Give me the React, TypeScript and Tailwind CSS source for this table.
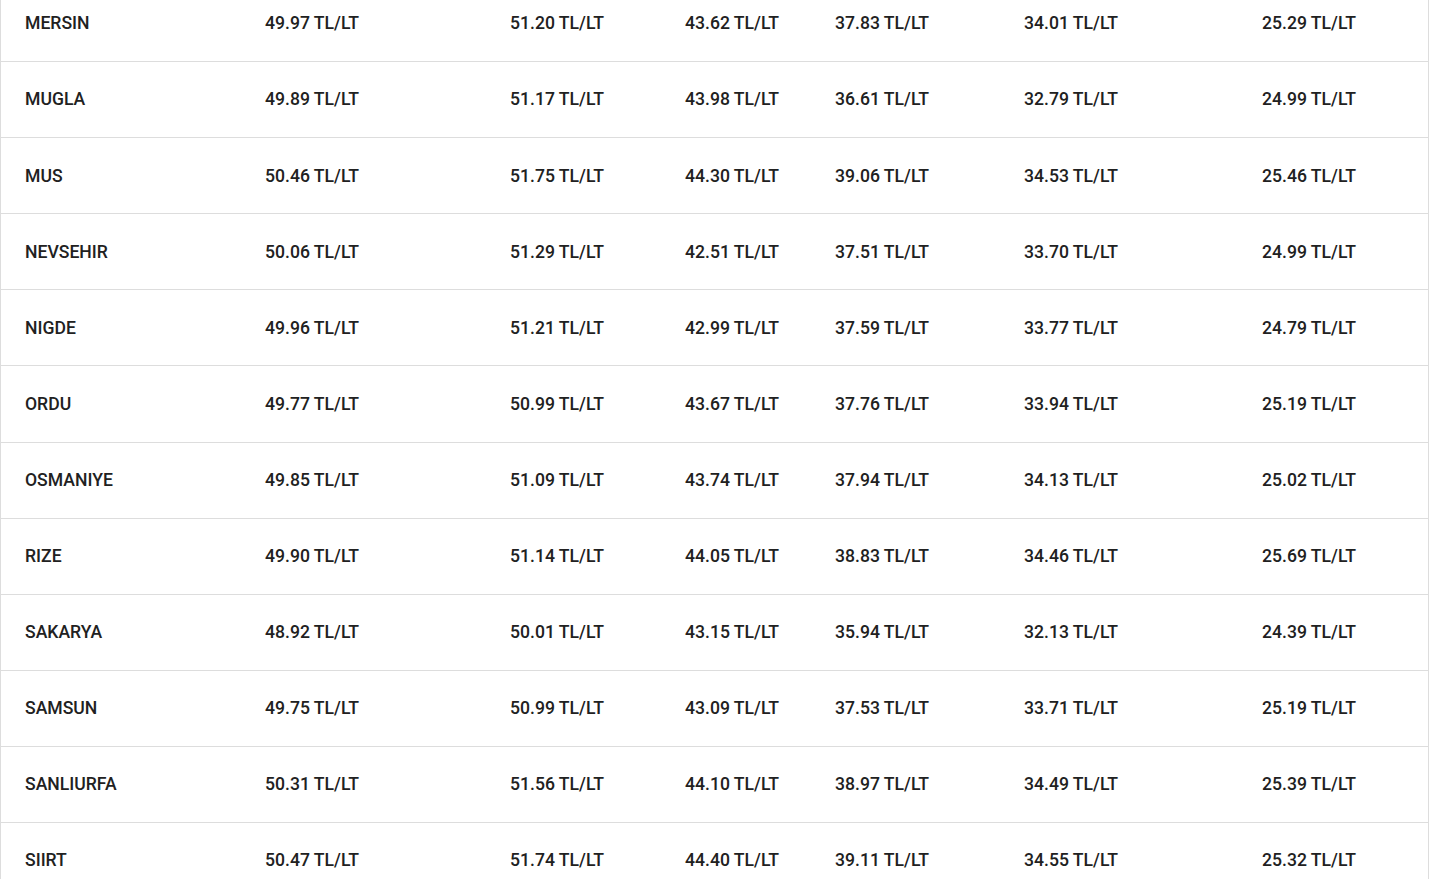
const rows: string[][] = [
  ["MERSIN", "49.97", "51.20", "43.62", "37.83", "34.01", "25.29"],
  ["MUGLA", "49.89", "51.17", "43.98", "36.61", "32.79", "24.99"],
  ["MUS", "50.46", "51.75", "44.30", "39.06", "34.53", "25.46"],
  ["NEVSEHIR", "50.06", "51.29", "42.51", "37.51", "33.70", "24.99"],
  ["NIGDE", "49.96", "51.21", "42.99", "37.59", "33.77", "24.79"],
  ["ORDU", "49.77", "50.99", "43.67", "37.76", "33.94", "25.19"],
  ["OSMANIYE", "49.85", "51.09", "43.74", "37.94", "34.13", "25.02"],
  ["RIZE", "49.90", "51.14", "44.05", "38.83", "34.46", "25.69"],
  ["SAKARYA", "48.92", "50.01", "43.15", "35.94", "32.13", "24.39"],
  ["SAMSUN", "49.75", "50.99", "43.09", "37.53", "33.71", "25.19"],
  ["SANLIURFA", "50.31", "51.56", "44.10", "38.97", "34.49", "25.39"],
  ["SIIRT", "50.47", "51.74", "44.40", "39.11", "34.55", "25.32"],
];

export default function App() {
  return (
    <div className="h-[879px] w-full overflow-hidden bg-white font-['Roboto',sans-serif] text-[17.6px] font-medium text-[#212121]">
      <div className="-mt-[14px] w-[1429px] border-x border-[#dddddd]">
        {rows.map((r) => (
          <div
            key={r[0]}
            className="grid h-[76.1px] grid-cols-[264px_245px_175px_150px_189px_238px_1fr] items-center border-b border-[#dddddd]"
          >
            <div className="pl-[24px]">{r[0]}</div>
            {r.slice(1).map((v, i) => (
              <div key={i}>{v} TL/LT</div>
            ))}
          </div>
        ))}
      </div>
    </div>
  );
}
